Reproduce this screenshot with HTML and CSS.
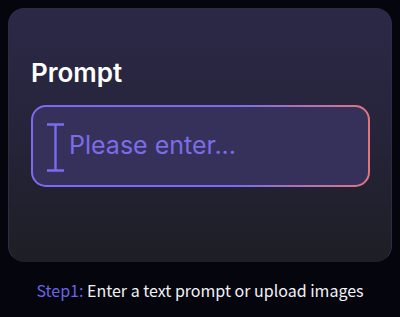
FILE: index.html
```html
<!DOCTYPE html>
<html lang="en">
<head>
  <meta charset="UTF-8">
  <title>Prompt</title>
  <link rel="stylesheet" href="styles.css">
</head>
<body>
  <div class="card">
    <h2 class="card-title">Prompt</h2>
    <div class="prompt-box">
      <div class="prompt-inner">
        <svg class="cursor-icon" width="17" height="49" viewBox="0 0 17 49">
          <path d="M0 1.5H17M8.5 1.5V47.5M0 47.5H17" stroke="#7a6cf0" stroke-width="2.4" fill="none"/>
        </svg>
        <span class="placeholder">Please enter...</span>
      </div>
    </div>
  </div>
  <p class="step"><span class="step-label">Step1:</span> Enter a text prompt or upload images</p>
</body>
</html>
```

FILE: styles.css
```css
body {
  margin: 0;
  padding: 8px;
  background-color: #04050d;
  font-family: Inter, 'Noto Sans', sans-serif;
}
.card {
  height: 254px;
  box-sizing: border-box;
  border-radius: 16px;
  border: 1px solid #2e2c45;
  border-bottom-color: #1f1f27;
  background: linear-gradient(180deg, #2b2947 0%, #25243a 50%, #1e1e25 100%);
  padding: 49px 21px 0 22px;
}
.card-title {
  margin: 0 0 17px;
  color: #fff;
  font-size: 26px;
  font-weight: 600;
  line-height: 30px;
}
.prompt-box {
  padding: 2px;
  border-radius: 15px;
  background: linear-gradient(90deg, #7a6cf0 0%, #7a6cf0 60%, #e3767c 100%);
}
.prompt-inner {
  height: 78px;
  border-radius: 13px;
  background-color: #35315b;
  display: flex;
  align-items: center;
  padding-left: 14px;
}
.cursor-icon {
  margin-right: 5px;
  margin-top: 2px;
}
.placeholder {
  color: #7b6de6;
  font-size: 25px;
  font-weight: 400;
  margin-top: -2px;
}
.step {
  margin: 16px 0 0;
  text-align: center;
  color: #f2f2f6;
  font-size: 16px;
  font-family: 'Noto Sans CJK TC', 'Noto Sans', sans-serif;
}
.step-label {
  color: #6c63e8;
}
```
